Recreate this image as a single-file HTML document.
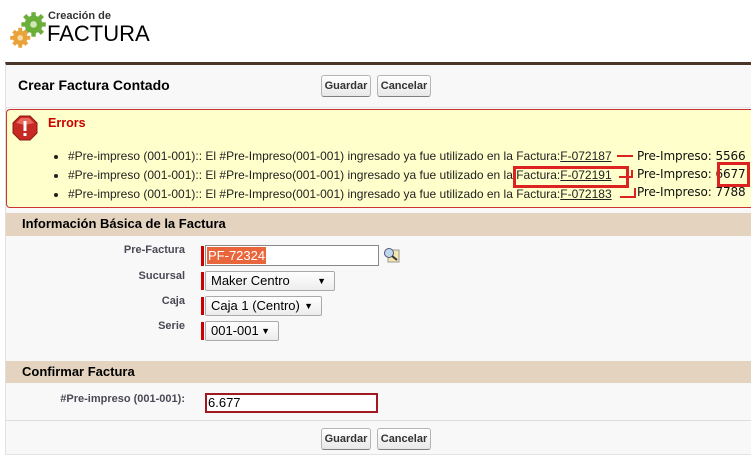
<!DOCTYPE html>
<html><head><meta charset="utf-8"><style>
*{margin:0;padding:0;box-sizing:border-box}
body{width:751px;height:455px;background:#fff;font-family:"Liberation Sans",Arial,sans-serif;position:relative;overflow:hidden;color:#000}
.a{position:absolute}
.btn{position:absolute;height:22px;border:1px solid #b5b5b5;border-bottom-color:#7f7f7f;border-radius:3px;background:linear-gradient(#fff,#e8e8e8);font-size:11px;font-weight:bold;color:#333;line-height:20px;text-align:center}
.lbl{position:absolute;font-size:11px;font-weight:bold;color:#4a4a56;text-align:right}
.req{position:absolute;width:3px;background:#c00}
.sel{position:absolute;height:20px;border:1px solid #aaa;border-radius:2px;background:linear-gradient(#fff,#ececec);font-size:13px;line-height:18px;padding-left:5px;color:#000}
.sel span{position:absolute;right:8px;font-size:9px;top:0}
li{font-size:12px;color:#222;height:19px;line-height:19px}
.pi{position:absolute;left:637px;font-family:"DejaVu Sans",sans-serif;font-size:12px;letter-spacing:-0.1px;color:#111;white-space:nowrap}
.rl{position:absolute;background:#d22;height:2px}
</style></head><body>
<svg class="a" style="left:8px;top:10px" width="40" height="40" viewBox="0 0 36 36">
<g fill="#6cae3a"><circle cx="23" cy="13" r="8"/><g stroke="#6cae3a" stroke-width="4"><line x1="23" y1="2" x2="23" y2="24"/><line x1="12" y1="13" x2="34" y2="13"/><line x1="15" y1="5" x2="31" y2="21"/><line x1="31" y1="5" x2="15" y2="21"/></g></g><circle cx="23" cy="13" r="3" fill="#cfe8b5"/>
<g fill="#e9a33a"><circle cx="11" cy="25" r="6.5"/><g stroke="#e9a33a" stroke-width="3.5"><line x1="11" y1="16" x2="11" y2="34"/><line x1="2" y1="25" x2="20" y2="25"/><line x1="5" y1="19" x2="17" y2="31"/><line x1="17" y1="19" x2="5" y2="31"/></g></g><circle cx="11" cy="25" r="2.5" fill="#f7dba8"/>
</svg>
<div class="a" style="left:48px;top:10px;font-size:11px;font-weight:bold;color:#333">Creación de</div>
<div class="a" style="left:47px;top:21px;font-size:22px;color:#000">FACTURA</div>
<div class="a" style="left:5px;top:62px;width:746px;height:393px;background:#f8f8f8;border-left:1px solid #e0e0e0;border-top:3px solid #4a3527"></div>
<div class="a" style="left:5px;top:107px;width:746px;height:1px;background:#e6e6e6"></div>
<div class="a" style="left:18px;top:77px;font-size:14px;font-weight:bold;color:#000">Crear Factura Contado</div>
<div class="btn" style="left:321px;top:75px;width:50px">Guardar</div>
<div class="btn" style="left:377px;top:75px;width:54px">Cancelar</div>
<div class="a" style="left:6px;top:109px;width:746px;height:99px;background:#ffffcc;border:1px solid #c33;border-right:none;border-radius:4px 0 0 4px"></div>
<svg class="a" style="left:12px;top:115px" width="26" height="26" viewBox="0 0 26 26"><polygon points="8,1 18,1 25,8 25,18 18,25 8,25 1,18 1,8" fill="#c62a22" stroke="#8a1a14"/><polygon points="9,3 17,3 22,8 13,10 4,8" fill="#e8685e"/><rect x="11.5" y="6" width="3" height="10" fill="#fff"/><rect x="11.5" y="18" width="3" height="3" fill="#fff"/></svg>
<div class="a" style="left:48px;top:116px;font-size:12.5px;font-weight:bold;color:#c00">Errors</div>
<ul class="a" style="left:68px;top:147px;list-style:disc">
<li>#Pre-impreso (001-001):: El #Pre-Impreso(001-001) ingresado ya fue utilizado en la Factura:<u>F-072187</u></li>
<li>#Pre-impreso (001-001):: El #Pre-Impreso(001-001) ingresado ya fue utilizado en la Factura:<u>F-072191</u></li>
<li>#Pre-impreso (001-001):: El #Pre-Impreso(001-001) ingresado ya fue utilizado en la Factura:<u>F-072183</u></li>
</ul>
<div class="pi" style="top:149px">Pre-Impreso: 5566</div>
<div class="pi" style="top:167px">Pre-Impreso: 6677</div>
<div class="pi" style="top:185px">Pre-Impreso: 7788</div>
<div class="a" style="left:513px;top:166px;width:116px;height:22px;border:3px solid #d22"></div>
<div class="a" style="left:717px;top:162px;width:33px;height:25px;border:3px solid #d22"></div>
<div class="rl" style="left:617px;top:155px;width:16px"></div>
<div class="rl" style="left:619px;top:176px;width:14px"></div>
<div class="a" style="left:631px;top:170px;width:2px;height:8px;background:#d22"></div>
<div class="rl" style="left:620px;top:196px;width:16px"></div>
<div class="a" style="left:634px;top:188px;width:2px;height:9px;background:#d22"></div>
<div class="a" style="left:6px;top:213px;width:745px;height:23px;background:#e3d3bf"></div>
<div class="a" style="left:22px;top:216px;font-size:13px;font-weight:bold;color:#000">Información Básica de la Factura</div>
<div class="lbl" style="left:60px;top:244px;width:125px">Pre-Factura</div>
<div class="req" style="left:201px;top:246px;height:20px"></div>
<div class="a" style="left:205px;top:245px;width:174px;height:21px;border:1px solid #888;background:#fff"></div>
<div class="a" style="left:207px;top:247px;height:17px;background:#e9663c;color:#fff;font-size:13px;line-height:17px;padding:0 1px">PF-72324</div>
<svg class="a" style="left:383px;top:247px" width="17" height="16" viewBox="0 0 17 16"><rect x="5" y="3" width="11" height="12" fill="#f3e7b0" stroke="#999"/><circle cx="6" cy="6" r="4.5" fill="#bcd7ee" stroke="#557"/><line x1="9" y1="9" x2="14" y2="13" stroke="#333" stroke-width="2"/></svg>
<div class="lbl" style="left:60px;top:270px;width:125px">Sucursal</div>
<div class="req" style="left:201px;top:272px;height:18px"></div>
<div class="sel" style="left:205px;top:271px;width:130px">Maker Centro<span>▼</span></div>
<div class="lbl" style="left:60px;top:295px;width:125px">Caja</div>
<div class="req" style="left:201px;top:297px;height:18px"></div>
<div class="sel" style="left:205px;top:296px;width:117px">Caja 1 (Centro)<span>▼</span></div>
<div class="lbl" style="left:60px;top:320px;width:125px">Serie</div>
<div class="req" style="left:201px;top:322px;height:18px"></div>
<div class="sel" style="left:205px;top:321px;width:74px">001-001<span>▼</span></div>
<div class="a" style="left:6px;top:361px;width:745px;height:22px;background:#e3d3bf"></div>
<div class="a" style="left:22px;top:364px;font-size:13px;font-weight:bold;color:#000">Confirmar Factura</div>
<div class="lbl" style="left:30px;top:393px;width:155px">#Pre-impreso (001-001):</div>
<div class="a" style="left:205px;top:393px;width:173px;height:20px;border:2px solid #a01820;background:#fff;font-size:13px;line-height:16px;padding-left:1px">6.677</div>
<div class="a" style="left:6px;top:420px;width:745px;height:1px;background:#ddd"></div>
<div class="btn" style="left:321px;top:428px;width:50px">Guardar</div>
<div class="btn" style="left:377px;top:428px;width:54px">Cancelar</div>
<div class="a" style="left:5px;top:454px;width:746px;height:1px;background:#e2e2e2"></div>
</body></html>
